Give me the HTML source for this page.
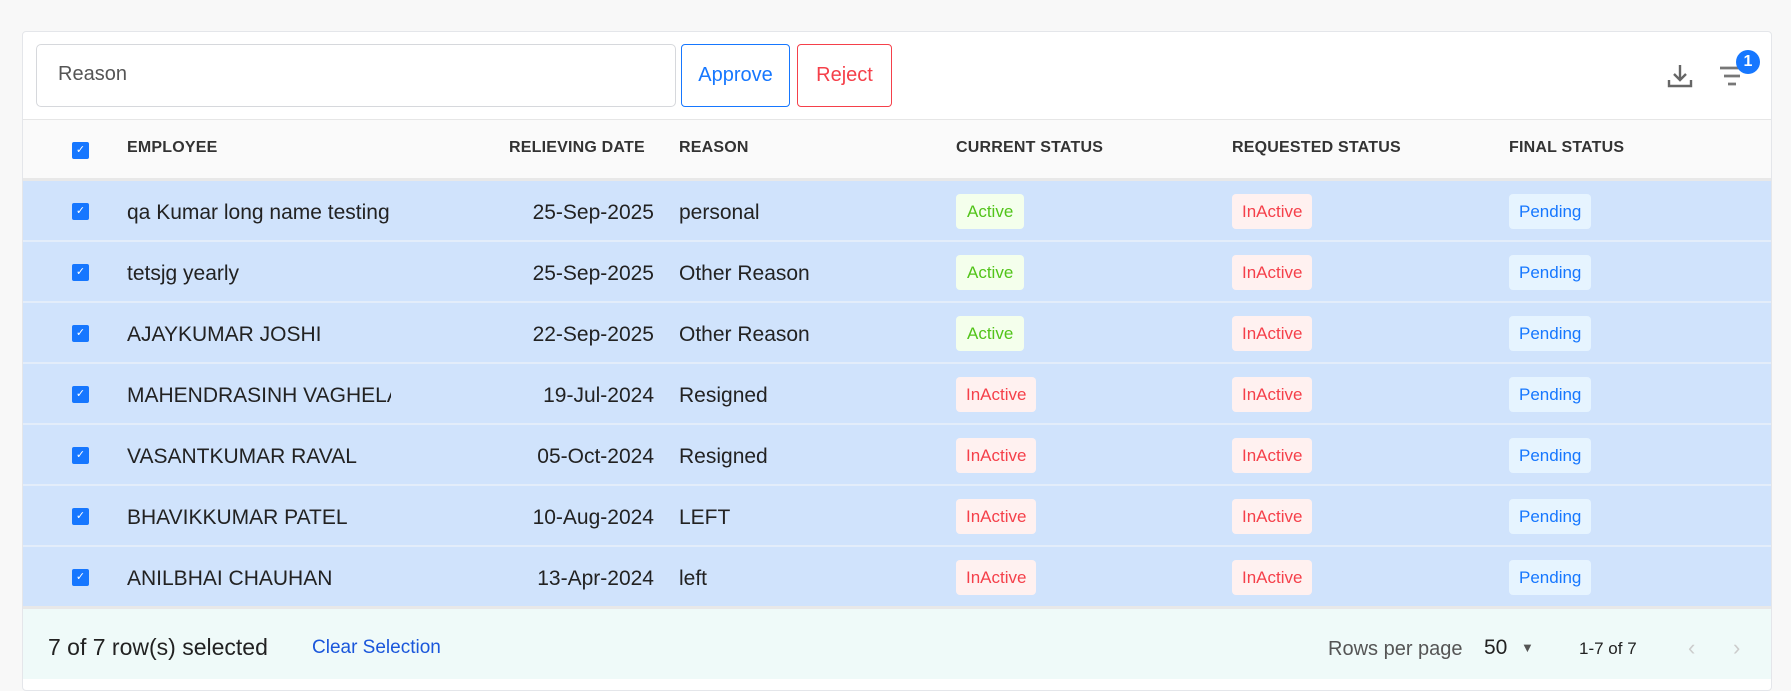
<!DOCTYPE html>
<html><head><meta charset="utf-8"><style>
*{box-sizing:border-box;margin:0;padding:0}
body{width:1791px;height:685px;background:#f8f8f8;font-family:"Liberation Sans",sans-serif;position:relative;overflow:hidden}
.card{position:absolute;left:22px;top:31px;width:1750px;height:660px;background:#fff;border:1px solid #e4e6ea;border-radius:4px;overflow:hidden}
.abs{position:absolute}
.inp{left:13px;top:12px;width:640px;height:63px;border:1px solid #d6d8dc;border-radius:5px;font-size:20px;color:#555;padding:18px 0 0 21px}
.btn{top:12px;height:63px;border-radius:4px;font-size:20px;text-align:center;line-height:61px}
.hdr{left:0;top:87px;width:1750px;height:62px;background:#fafafa;border-top:1px solid #e6e6e6;border-bottom:3px solid #e8e8e8}
.hdr span{position:absolute;top:19px;font-size:16px;font-weight:bold;color:#333;letter-spacing:.2px}
.row{left:0;width:1750px;height:61px;background:#d0e3fc;border-bottom:2px solid #e3edfa}
.row span{position:absolute;top:20px;font-size:21px;color:#222}
.cb{position:absolute;left:49px;width:17px;height:17px;background:#1677ff;border-radius:2px;color:#fff;font-size:11px;text-align:center;line-height:17px}
.bd{position:absolute;top:13px !important;height:35px;border-radius:4px;font-size:17px !important;padding:0 10px;line-height:35px}
.a{background:#f4ffec;color:#52c41a !important;padding:0 11px !important}
.i{background:#fff1f0;color:#f5404a !important}
.p{background:#e6f4ff;color:#1677ff !important}
.ft{left:0;top:577px;width:1750px;height:70px;background:#effaf9}
.ft span{position:absolute}
.clip{width:264px;overflow:hidden;white-space:nowrap}
</style></head><body>
<div class="card">
<div class="abs inp">Reason</div>
<div class="abs btn" style="left:658px;width:109px;border:1px solid #1677ff;color:#1677ff">Approve</div>
<div class="abs btn" style="left:774px;width:95px;border:1px solid #f5404a;color:#f5404a">Reject</div>
<svg class="abs" style="left:1644px;top:31px" width="26" height="26" viewBox="0 0 26 26" fill="none" stroke="#666" stroke-width="2.4"><path d="M13 2v15M7 11l6 6 6-6M2 17v6h22v-6"/></svg>
<svg class="abs" style="left:1696px;top:34px" width="26" height="22" viewBox="0 0 26 22" stroke="#777" stroke-width="2.8"><path d="M1 2h24M5 10h16M9 18h8"/></svg>
<div class="abs" style="left:1713px;top:18px;width:24px;height:24px;border-radius:50%;background:#1677ff;color:#fff;font-size:16px;font-weight:bold;text-align:center;line-height:24px">1</div>
<div class="abs hdr">
<div class="cb" style="top:22px">✓</div>
<span style="left:104px">EMPLOYEE</span>
<span style="left:486px">RELIEVING DATE</span>
<span style="left:656px">REASON</span>
<span style="left:933px">CURRENT STATUS</span>
<span style="left:1209px">REQUESTED STATUS</span>
<span style="left:1486px">FINAL STATUS</span>
</div>
<div class="abs" style="left:0;top:149px">
<div class="abs row" style="top:0"><div class="cb" style="top:22px">✓</div><span class="clip" style="left:104px">qa Kumar long name testing</span><span style="right:1119px">25-Sep-2025</span><span style="left:656px">personal</span><span class="bd a" style="left:933px">Active</span><span class="bd i" style="left:1209px">InActive</span><span class="bd p" style="left:1486px">Pending</span></div>
<div class="abs row" style="top:61px"><div class="cb" style="top:22px">✓</div><span style="left:104px">tetsjg yearly</span><span style="right:1119px">25-Sep-2025</span><span style="left:656px">Other Reason</span><span class="bd a" style="left:933px">Active</span><span class="bd i" style="left:1209px">InActive</span><span class="bd p" style="left:1486px">Pending</span></div>
<div class="abs row" style="top:122px"><div class="cb" style="top:22px">✓</div><span style="left:104px">AJAYKUMAR JOSHI</span><span style="right:1119px">22-Sep-2025</span><span style="left:656px">Other Reason</span><span class="bd a" style="left:933px">Active</span><span class="bd i" style="left:1209px">InActive</span><span class="bd p" style="left:1486px">Pending</span></div>
<div class="abs row" style="top:183px"><div class="cb" style="top:22px">✓</div><span class="clip" style="left:104px">MAHENDRASINH VAGHELA</span><span style="right:1119px">19-Jul-2024</span><span style="left:656px">Resigned</span><span class="bd i" style="left:933px">InActive</span><span class="bd i" style="left:1209px">InActive</span><span class="bd p" style="left:1486px">Pending</span></div>
<div class="abs row" style="top:244px"><div class="cb" style="top:22px">✓</div><span style="left:104px">VASANTKUMAR RAVAL</span><span style="right:1119px">05-Oct-2024</span><span style="left:656px">Resigned</span><span class="bd i" style="left:933px">InActive</span><span class="bd i" style="left:1209px">InActive</span><span class="bd p" style="left:1486px">Pending</span></div>
<div class="abs row" style="top:305px"><div class="cb" style="top:22px">✓</div><span style="left:104px">BHAVIKKUMAR PATEL</span><span style="right:1119px">10-Aug-2024</span><span style="left:656px">LEFT</span><span class="bd i" style="left:933px">InActive</span><span class="bd i" style="left:1209px">InActive</span><span class="bd p" style="left:1486px">Pending</span></div>
<div class="abs row" style="top:366px;border-bottom:3px solid #e8e8e8;height:62px"><div class="cb" style="top:22px">✓</div><span style="left:104px">ANILBHAI CHAUHAN</span><span style="right:1119px">13-Apr-2024</span><span style="left:656px">left</span><span class="bd i" style="left:933px">InActive</span><span class="bd i" style="left:1209px">InActive</span><span class="bd p" style="left:1486px">Pending</span></div>
</div>
<div class="abs ft">
<span style="left:25px;top:25px;font-size:23px;color:#222">7 of 7 row(s) selected</span>
<span style="left:289px;top:28px;font-size:19px;color:#1a56db">Clear Selection</span>
<span style="left:1305px;top:29px;font-size:20px;color:#555">Rows per page</span>
<span style="left:1461px;top:27px;font-size:21px;color:#222">50</span>
<span style="left:1498px;top:31px;font-size:13px;color:#555">▼</span>
<span style="left:1556px;top:30px;font-size:17px;color:#222">1-7 of 7</span>
<span style="left:1665px;top:26px;font-size:22px;color:#ccc">&#x2039;</span>
<span style="left:1710px;top:26px;font-size:22px;color:#ccc">&#x203A;</span>
</div>
</div>
</body></html>
